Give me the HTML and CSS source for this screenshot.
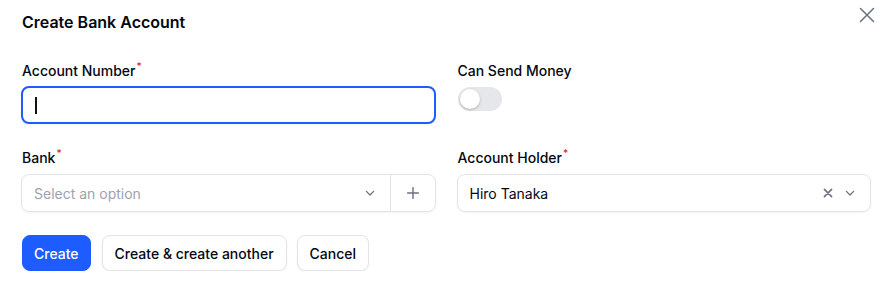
FILE: index.html
```html
<!DOCTYPE html>
<html lang="en">
<head>
<meta charset="utf-8">
<title>Create Bank Account</title>
<link rel="stylesheet" href="styles.css">
</head>
<body>
<div class="modal">
  <header class="modal-head">
    <h2 class="title">Create Bank Account</h2>
    <button class="close" type="button" aria-label="Close">
      <svg viewBox="0 0 24 24" width="26" height="26" fill="none" stroke="currentColor" stroke-width="1.4" stroke-linecap="round"><path d="M6 6l12 12M18 6L6 18"/></svg>
    </button>
  </header>
  <form class="form">
    <div class="grid">
      <div class="field">
        <label class="label">Account Number<sup class="req">*</sup></label>
        <div class="input-wrp focus"><span class="caret"></span></div>
      </div>
      <div class="field">
        <label class="label">Can Send Money</label>
        <div class="toggle"><span class="knob"></span></div>
      </div>
      <div class="field">
        <label class="label">Bank<sup class="req">*</sup></label>
        <div class="input-wrp select">
          <span class="placeholder">Select an option</span>
          <svg class="chev" viewBox="0 0 20 20" width="16" height="16" fill="none" stroke="currentColor" stroke-width="1.6" stroke-linecap="round" stroke-linejoin="round"><path d="M5.5 8l4.5 4.5L14.5 8"/></svg>
          <span class="suffix">
            <svg viewBox="0 0 20 20" width="18" height="18" fill="none" stroke="currentColor" stroke-width="1.6" stroke-linecap="round"><path d="M10 4v12M4 10h12"/></svg>
          </span>
        </div>
      </div>
      <div class="field">
        <label class="label">Account Holder<sup class="req">*</sup></label>
        <div class="input-wrp select">
          <span class="value">Hiro Tanaka</span>
          <svg class="clear" viewBox="0 0 20 20" width="16" height="16" fill="none" stroke="currentColor" stroke-width="2" stroke-linecap="round"><path d="M5.5 5.5l9 9M14.5 5.5l-9 9"/></svg>
          <svg class="chev" viewBox="0 0 20 20" width="16" height="16" fill="none" stroke="currentColor" stroke-width="1.6" stroke-linecap="round" stroke-linejoin="round"><path d="M5.5 8l4.5 4.5L14.5 8"/></svg>
        </div>
      </div>
    </div>
    <div class="actions">
      <button type="button" class="btn primary">Create</button>
      <button type="button" class="btn">Create &amp; create another</button>
      <button type="button" class="btn last">Cancel</button>
    </div>
  </form>
</div>
</body>
</html>
```

FILE: styles.css
```css
* { box-sizing: border-box; }
html, body { margin: 0; background: #fff; }
body {
  font-family: Inter, "Noto Sans", sans-serif;
  color: #030712;
}
.modal {
  padding: 10px 18px 0 22px;
}
.modal-head {
  display: flex;
  justify-content: space-between;
  align-items: flex-start;
}
.title {
  margin: 0;
  font-size: 16px;
  line-height: 24px;
  font-weight: 600;
}
.close {
  margin: -8px -10px 0 0;
  padding: 0;
  border: 0;
  background: none;
  color: #6b7280;
  width: 26px;
  height: 26px;
  display: flex;
}
.form { margin-top: 27px; }
.grid {
  display: grid;
  grid-template-columns: 1fr 1fr;
  column-gap: 23px;
  row-gap: 24px;
}
.field {
  display: flex;
  flex-direction: column;
  gap: 6px;
}
.label {
  font-size: 14px;
  line-height: 20px;
  font-weight: 500;
}
.req {
  color: #dc2626;
  font-size: 10px;
  font-weight: 500;
  margin-left: 1px;
  vertical-align: 6px;
  line-height: 0;
}
.input-wrp {
  height: 38px;
  margin: 0 -1px;
  border: 1px solid #e4e4e7;
  border-radius: 8px;
  box-shadow: 0 1px 2px rgba(0,0,0,0.05);
  display: flex;
  align-items: center;
  font-size: 14px;
}
.input-wrp.focus {
  border: 2px solid #1d5cff;
  padding-left: 12px;
  margin-top: -1px;
}
.caret {
  width: 1.5px;
  height: 17px;
  background: #111;
}
.select { padding-left: 12px; }
.placeholder { color: #9ca3af; flex: 1; }
.value { flex: 1; color: #030712; }
.chev { color: #6b7280; margin-right: 12px; }
.clear { color: #6b7280; margin-right: 6px; }
.suffix {
  align-self: stretch;
  width: 45px;
  border-left: 1px solid #e4e4e7;
  display: flex;
  align-items: center;
  justify-content: center;
  color: #6b7280;
}
.toggle {
  width: 44px;
  height: 24px;
  border-radius: 12px;
  background: #e5e7eb;
  padding: 2px;
}
.knob {
  display: block;
  width: 20px;
  height: 20px;
  border-radius: 50%;
  background: #fff;
  box-shadow: 0 1px 3px rgba(0,0,0,0.15), 0 1px 2px rgba(0,0,0,0.1);
}
.actions {
  display: flex;
  gap: 11px;
  margin-top: 23px;
}
.btn {
  height: 36px;
  padding: 0 12px;
  border-radius: 8px;
  border: 1px solid #e4e4e7;
  background: #fff;
  color: #030712;
  font-family: Inter, "Noto Sans", sans-serif;
  font-size: 14px;
  font-weight: 500;
  box-shadow: 0 1px 2px rgba(0,0,0,0.05);
}
.btn.primary {
  padding: 0 11px;
  background: #1d5cff;
  border-color: #1d5cff;
  color: #fff;
}
.btn.last { margin-left: -1px; }
```
